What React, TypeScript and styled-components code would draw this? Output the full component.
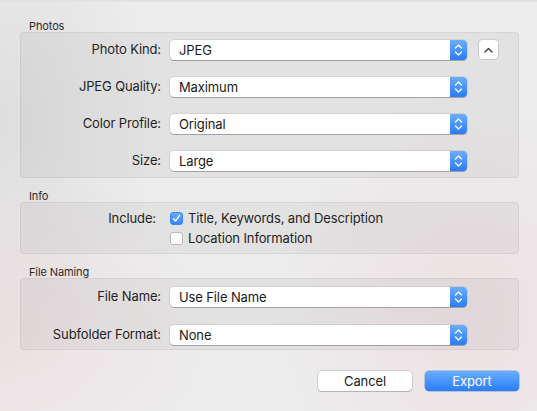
import React from "react"
import styled, {createGlobalStyle} from "styled-components"

const GlobalStyle = createGlobalStyle`
    html, body {
        margin: 0;
        padding: 0;
    }
    body {
        font-family: Inter, "Liberation Sans", sans-serif;
        letter-spacing: -0.12px;
        -webkit-font-smoothing: antialiased;
    }
`

const Window = styled.div`
    box-sizing: border-box;
    width: 537px;
    height: 411px;
    padding: 16px 18px 0 20px;
    border-top: 2px solid #e2e2e2;
    background:
        radial-gradient(ellipse 220px 160px at 0px 330px, rgba(236, 214, 218, 0.55), transparent),
        radial-gradient(ellipse 200px 220px at 470px 310px, rgba(236, 216, 220, 0.6), transparent),
        radial-gradient(ellipse 160px 260px at 0px 120px, rgba(210, 210, 210, 0.55), transparent),
        #ededed;
    color: #222;
    overflow: hidden;
`

const Section = styled.section<{$top?: number}>`
    margin-top: ${({$top}) => $top ?? 0}px;
`

const SectionTitle = styled.div`
    font-size: 11px;
    line-height: 13px;
    height: 11px;
    padding: 2px 0 0 9px;
    margin-bottom: 1px;
    color: #2b2b2b;
`

const Box = styled.div<{$pad: string, $gap?: number}>`
    display: grid;
    grid-template-columns: 140px auto;
    column-gap: 9px;
    row-gap: ${({$gap}) => $gap ?? 16}px;
    padding: ${({$pad}) => $pad};
    background: rgba(0, 0, 0, 0.045);
    border: 1px solid rgba(0, 0, 0, 0.055);
    border-radius: 4px;
`

const Label = styled.div<{$inset?: number}>`
    font-size: 13px;
    line-height: 20px;
    text-align: right;
    padding-right: ${({$inset}) => $inset ?? 0}px;
    color: #1f1f1f;
    white-space: nowrap;
`

const Field = styled.div`
    display: flex;
    align-items: center;
    gap: 11px;
    height: 21px;
`

const Popup = styled.div`
    position: relative;
    display: flex;
    align-items: center;
    box-sizing: border-box;
    width: 297px;
    height: 20px;
    padding-left: 9px;
    background: #fff;
    border-radius: 4px;
    box-shadow: 0 0 0 0.5px rgba(0, 0, 0, 0.15), 0 1px 0 0 rgba(0, 0, 0, 0.22);
    font-size: 13px;
    color: #1a1a1a;
    overflow: hidden;
`

const Stepper = styled.div`
    position: absolute;
    right: 0;
    top: 0;
    bottom: 0;
    width: 17px;
    display: flex;
    align-items: center;
    justify-content: center;
    background: linear-gradient(#6aaefc, #2b7bfa);
`

const SmallButton = styled.div`
    box-sizing: border-box;
    width: 21px;
    height: 21px;
    display: flex;
    align-items: center;
    justify-content: center;
    background: #fff;
    border: 1px solid #c9c9c9;
    border-radius: 4px;
`

const Checks = styled.div`
    display: flex;
    flex-direction: column;
`

const CheckRow = styled.label`
    display: flex;
    align-items: center;
    gap: 5px;
    height: 20px;
    font-size: 13px;
    color: #1f1f1f;
`

const CheckBox = styled.span<{$checked?: boolean}>`
    box-sizing: border-box;
    width: 13px;
    height: 13px;
    display: flex;
    align-items: center;
    justify-content: center;
    border-radius: 3px;
    ${({$checked}) => $checked ? `
        background: linear-gradient(#68aafc, #3384fb);
        border: 1px solid #3a86f3;
    ` : `
        background: #fff;
        border: 1px solid #b9b9b9;
    `}
`

const Footer = styled.div`
    display: flex;
    justify-content: flex-end;
    gap: 13px;
    margin-top: 21px;
`

const Button = styled.div<{$primary?: boolean}>`
    box-sizing: border-box;
    width: 94px;
    height: 20px;
    display: flex;
    align-items: center;
    justify-content: center;
    font-size: 13px;
    border-radius: 4px;
    ${({$primary}) => $primary ? `
        background: linear-gradient(#6aadfd, #2b7cf8);
        color: #fff;
        box-shadow: 0 0 0 0.5px rgba(30, 90, 200, 0.5);
    ` : `
        background: #fff;
        color: #1a1a1a;
        box-shadow: 0 0 0 0.5px rgba(0, 0, 0, 0.25), 0 1px 0 0 rgba(0, 0, 0, 0.12);
    `}
`

const Arrows = () => (
    <svg width="9" height="14" viewBox="0 0 9 14">
        <path d="M1.5 5 L4.5 2 L7.5 5 M1.5 9 L4.5 12 L7.5 9" fill="none" stroke="#fff" strokeWidth="1.3" strokeLinecap="round" strokeLinejoin="round"/>
    </svg>
)

const Caret = () => (
    <svg width="9" height="6" viewBox="0 0 9 6">
        <path d="M1 5 L4.5 1.5 L8 5" fill="none" stroke="#3a3a3a" strokeWidth="1.4" strokeLinecap="round" strokeLinejoin="round"/>
    </svg>
)

const Tick = () => (
    <svg width="9" height="9" viewBox="0 0 9 9">
        <path d="M1.5 4.8 L3.6 7 L7.6 1.4" fill="none" stroke="#fff" strokeWidth="1.5" strokeLinecap="round" strokeLinejoin="round"/>
    </svg>
)

const Select = ({value}: {value: string}) => (
    <Popup>
        {value}
        <Stepper><Arrows/></Stepper>
    </Popup>
)

export default function App() {
    return (
        <>
            <GlobalStyle/>
            <Window>
                <Section>
                    <SectionTitle>Photos</SectionTitle>
                    <Box $pad="6px 0 6px 0">
                        <Label>Photo Kind:</Label>
                        <Field>
                            <Select value="JPEG"/>
                            <SmallButton><Caret/></SmallButton>
                        </Field>
                        <Label>JPEG Quality:</Label>
                        <Field><Select value="Maximum"/></Field>
                        <Label>Color Profile:</Label>
                        <Field><Select value="Original"/></Field>
                        <Label>Size:</Label>
                        <Field><Select value="Large"/></Field>
                    </Box>
                </Section>
                <Section $top={10}>
                    <SectionTitle>Info</SectionTitle>
                    <Box $pad="5px 0 5px 0">
                        <Label $inset={5}>Include:</Label>
                        <Checks>
                            <CheckRow><CheckBox $checked><Tick/></CheckBox>Title, Keywords, and Description</CheckRow>
                            <CheckRow><CheckBox/>Location Information</CheckRow>
                        </Checks>
                    </Box>
                </Section>
                <Section $top={10}>
                    <SectionTitle>File Naming</SectionTitle>
                    <Box $pad="7px 0 4px 0" $gap={17}>
                        <Label>File Name:</Label>
                        <Field><Select value="Use File Name"/></Field>
                        <Label>Subfolder Format:</Label>
                        <Field><Select value="None"/></Field>
                    </Box>
                </Section>
                <Footer>
                    <Button>Cancel</Button>
                    <Button $primary>Export</Button>
                </Footer>
            </Window>
        </>
    )
}
